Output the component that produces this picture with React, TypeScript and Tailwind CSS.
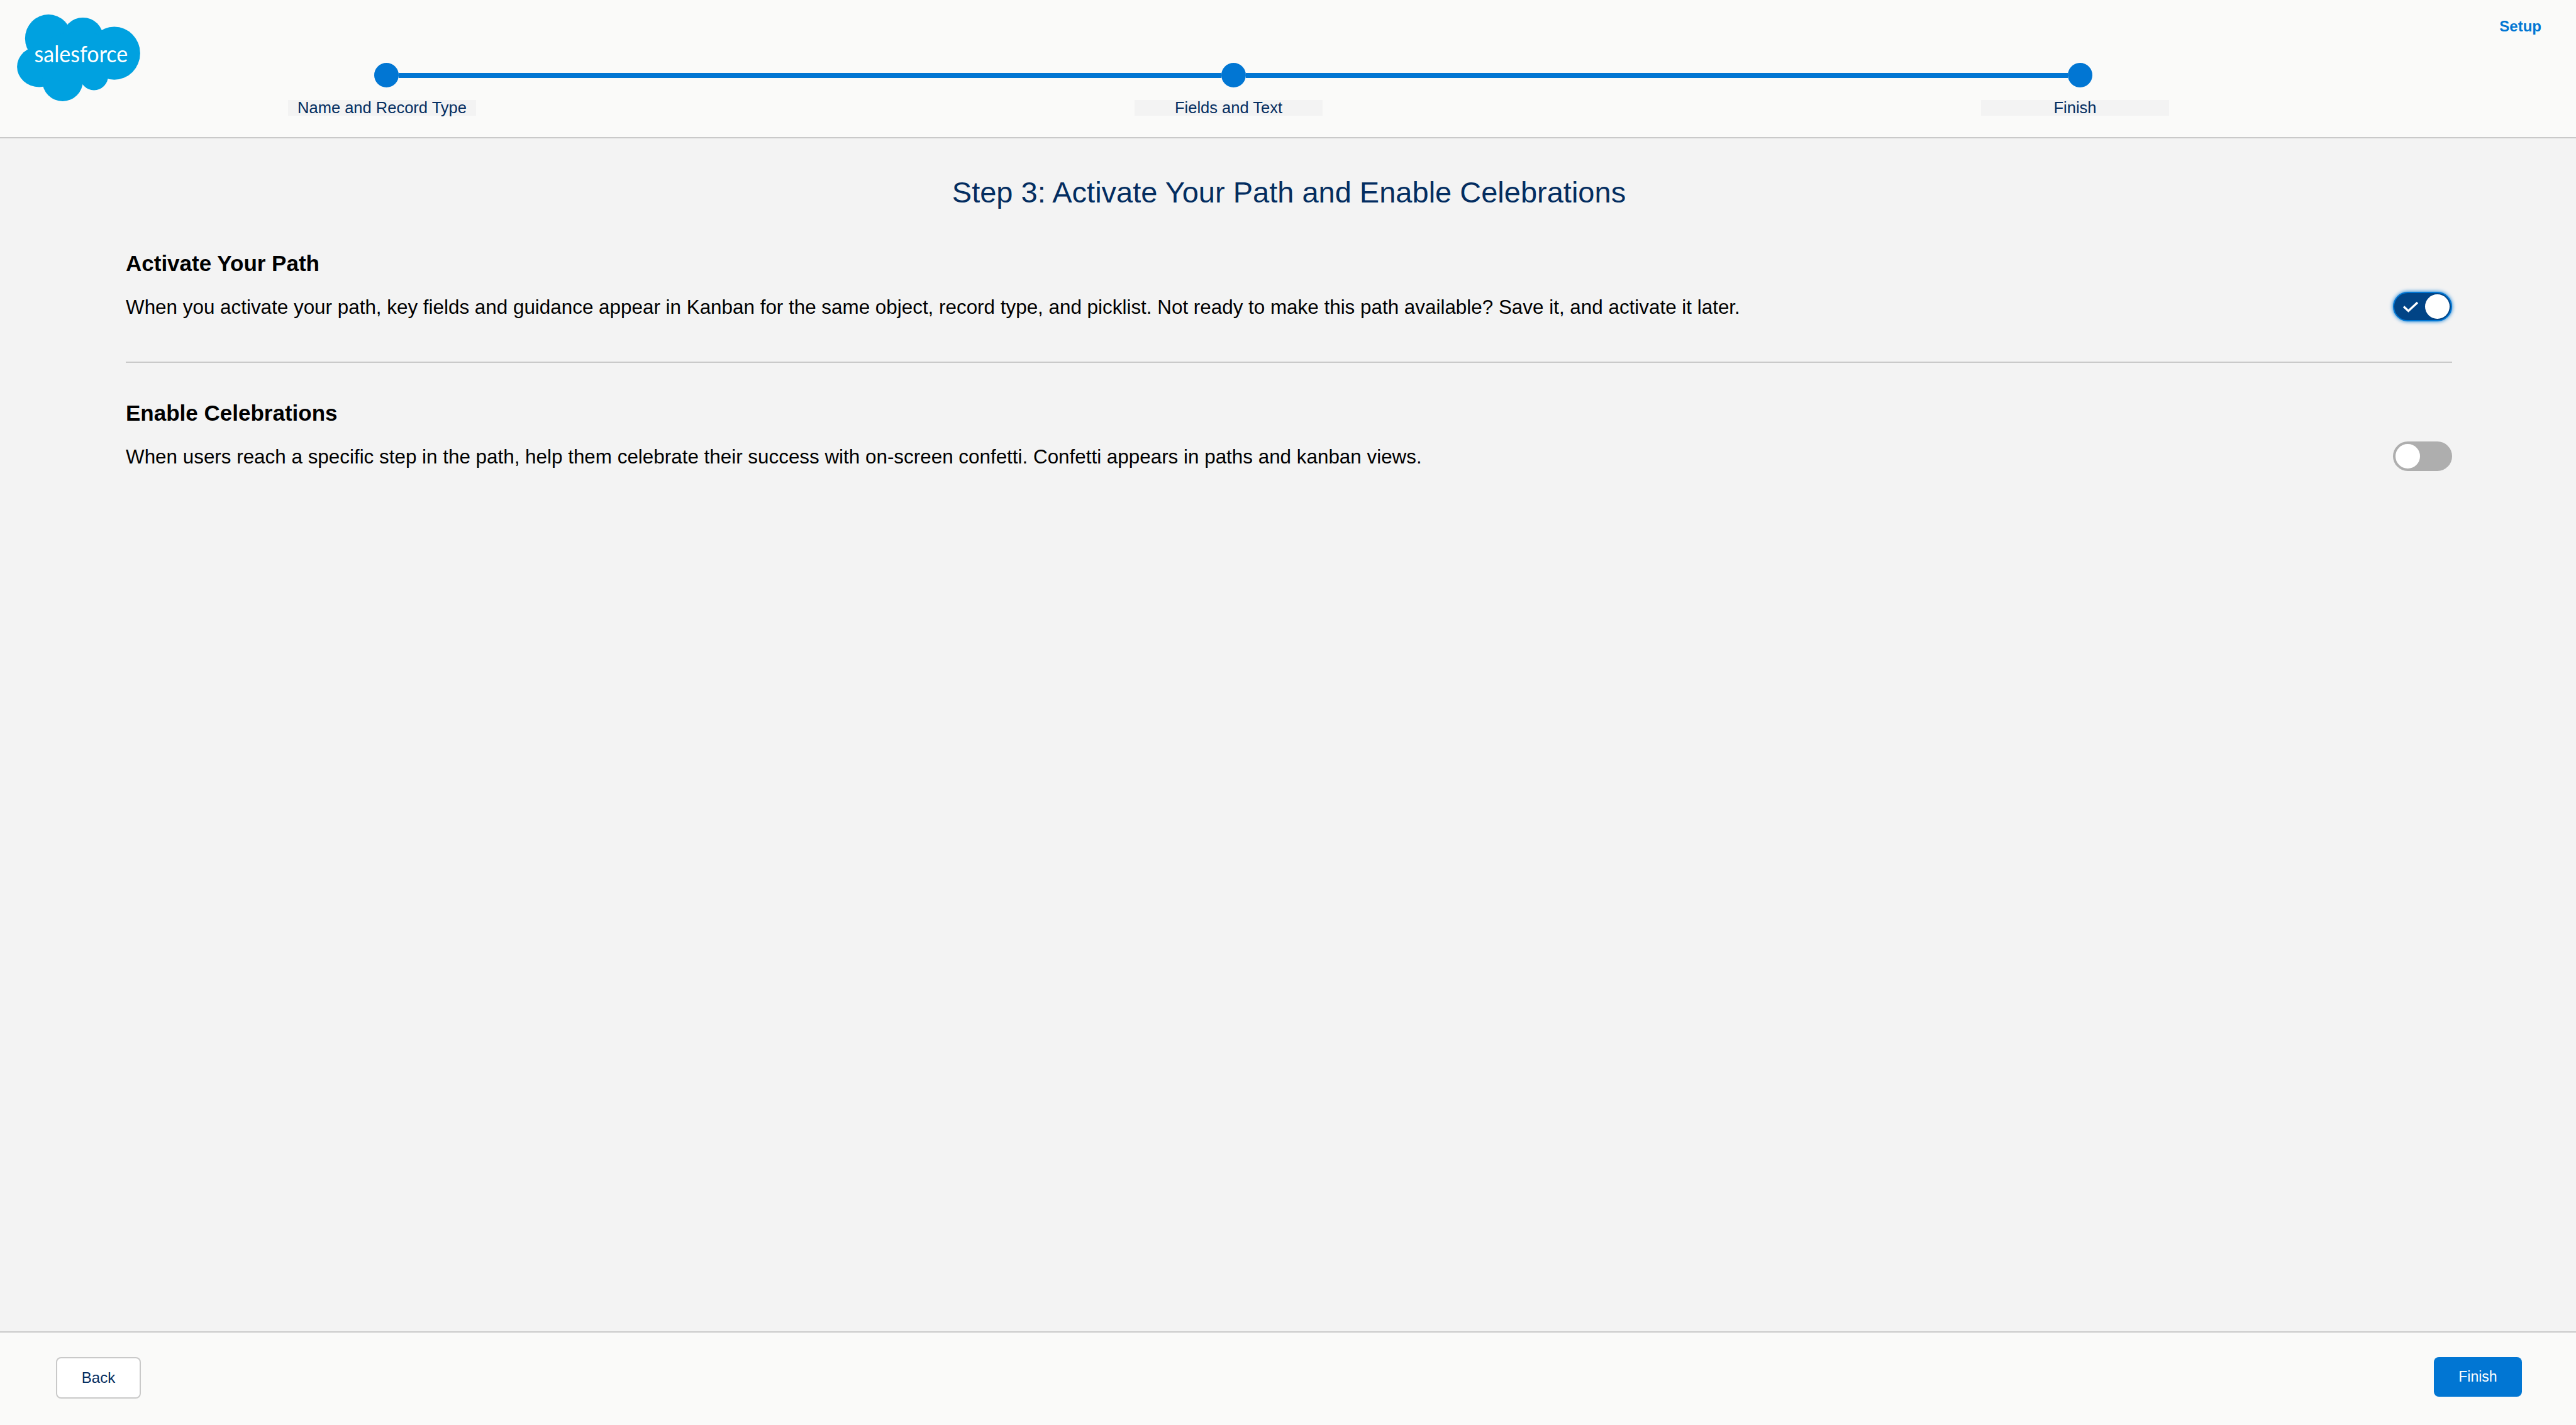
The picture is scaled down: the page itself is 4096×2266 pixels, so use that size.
import React from "react";

const steps = ["Name and Record Type", "Fields and Text", "Finish"];

const SalesforceLogo: React.FC = () => (
  <svg width="196" height="138" viewBox="0 0 200 141" className="shrink-0">
    <g fill="#00a1e0">
      <ellipse cx="51" cy="39" rx="38" ry="39" />
      <circle cx="107" cy="38" r="33" />
      <ellipse cx="158" cy="63" rx="42" ry="43" />
      <ellipse cx="36" cy="85" rx="36" ry="33" />
      <circle cx="74" cy="108" r="33" />
      <circle cx="125" cy="100" r="23" />
      <ellipse cx="100" cy="70" rx="72" ry="42" />
    </g>
    <text
      x="28"
      y="78"
      fill="#fff"
      fontSize="37"
      textLength="152"
      lengthAdjust="spacingAndGlyphs"
      fontFamily="Lato, sans-serif"
    >
      salesforce
    </text>
  </svg>
);

const Toggle: React.FC<{ on: boolean }> = ({ on }) =>
  on ? (
    <div className="mb-[3px] flex h-[47px] w-[94px] shrink-0 items-center justify-between rounded-full border-2 border-[#0176d3] bg-[#014486] pl-[13px] pr-[2px] shadow-[0_0_6px_#0176d3]">
      <svg width="26" height="20" viewBox="0 0 26 20" fill="none">
        <path d="M2 9.5 L9.5 16.5 L24 3" stroke="#fff" strokeWidth="3.4" />
      </svg>
      <div className="h-[39px] w-[39px] rounded-full bg-white" />
    </div>
  ) : (
    <div className="mb-[3px] flex h-[47px] w-[94px] shrink-0 items-center rounded-full bg-[#aeaeae] p-[4px]">
      <div className="h-[39px] w-[39px] rounded-full bg-white" />
    </div>
  );

const Section: React.FC<{ title: string; text: string; on: boolean }> = ({ title, text, on }) => (
  <section>
    <h3 className="text-[35px] leading-[40px] font-bold text-black">{title}</h3>
    <div className="mt-[30px] flex h-[40px] items-center justify-between">
      <p className="text-[31.4px] leading-[40px] text-black">{text}</p>
      <Toggle on={on} />
    </div>
  </section>
);

export default function App() {
  return (
    <div className="flex h-screen w-full flex-col bg-[#f3f3f3] font-['Liberation_Sans',sans-serif]">
      {/* Header with stepper */}
      <header className="flex h-[220px] shrink-0 items-start border-b-2 border-[#c9c9c9] bg-[#fafaf9]">
        <div className="ml-[27px] mt-[23px]">
          <SalesforceLogo />
        </div>
        <div className="ml-[235px] w-[2991px] pt-[100px]">
          <div className="flex items-center pl-[137px] pr-[122px]">
            <div className="h-[39px] w-[39px] shrink-0 rounded-full bg-[#0176d3]" />
            <div className="h-[8px] flex-1 bg-[#0176d3]" />
            <div className="h-[39px] w-[39px] shrink-0 rounded-full bg-[#0176d3]" />
            <div className="h-[8px] flex-1 bg-[#0176d3]" />
            <div className="h-[39px] w-[39px] shrink-0 rounded-full bg-[#0176d3]" />
          </div>
          <div className="mt-[20px] flex justify-between">
            {steps.map((step) => (
              <div
                key={step}
                className="flex h-[25px] w-[299px] items-center justify-center bg-[#f3f3f3] text-[25.5px] text-[#032d60]"
              >
                {step}
              </div>
            ))}
          </div>
        </div>
        <a className="ml-auto mr-[55px] mt-[28px] text-[24px] leading-[28px] font-bold text-[#0176d3]">Setup</a>
      </header>

      <main className="flex-1 pl-[200px] pr-[197px]">
        <h1 className="mt-[58px] text-center text-[47px] leading-[56px] text-[#032d60]">
          Step 3: Activate Your Path and Enable Celebrations
        </h1>
        <div className="mt-[65px]">
          <Section
            title="Activate Your Path"
            text="When you activate your path, key fields and guidance appear in Kanban for the same object, record type, and picklist. Not ready to make this path available? Save it, and activate it later."
            on
          />
        </div>
        <div className="mb-[60px] mt-[66px] h-[2px] bg-[#c9c9c9]" />
        <Section
          title="Enable Celebrations"
          text="When users reach a specific step in the path, help them celebrate their success with on-screen confetti. Confetti appears in paths and kanban views."
          on={false}
        />
      </main>

      {/* Footer */}
      <footer className="flex h-[149px] shrink-0 items-start justify-between border-t-2 border-[#c9c9c9] bg-[#fafaf9] pl-[89px] pr-[86px] pt-[39px]">
        <button className="h-[66px] w-[135px] rounded-[8px] border-2 border-[#c9c9c9] bg-white text-[24px] text-[#032d60]">
          Back
        </button>
        <button className="h-[63px] w-[140px] rounded-[8px] bg-[#0176d3] text-[23px] text-white">Finish</button>
      </footer>
    </div>
  );
}
